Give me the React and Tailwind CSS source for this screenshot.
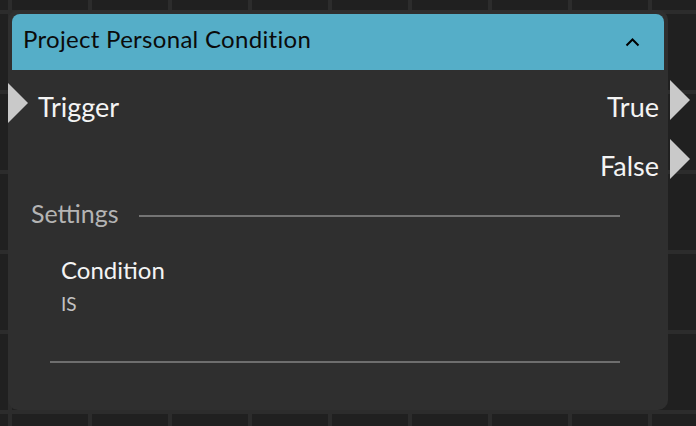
// port handle drawn as a css triangle
function Handle({ className }) {
    return (
        <div className={`absolute w-0 h-0 border-y-[20px] border-y-transparent border-l-[20px] border-l-[#c9c9c9] ${className}`} />
    );
}

export default function App() {
    return (
        <div
            className="w-[696px] h-[426px] overflow-hidden bg-[#202020] pl-[8px] pt-[10px] [background-image:linear-gradient(to_right,#2c2c2c_4px,transparent_4px),linear-gradient(to_bottom,#2c2c2c_4px,transparent_4px)] [background-size:80px_80px] [background-position:8px_10px]"
            style={{ fontFamily: 'Lato, "Open Sans", sans-serif' }}
        >
            <div className="w-[660px] h-[400px] rounded-[10px] bg-[#2f2f2f] p-[4px] flex flex-col">
                <div className="h-[56px] shrink-0 rounded-t-[8px] bg-[#55aec8] flex items-center justify-between pl-[11px] pr-[24px] pb-[6px]">
                    <span className="text-[24px] leading-none tracking-[0.3px] text-[#0b0b0b]">Project Personal Condition</span>
                    <svg width="15" height="9" viewBox="0 0 15 9" className="mt-[6px]">
                        <polyline points="1.5,7.5 7.5,1.5 13.5,7.5" fill="none" stroke="#000" strokeWidth="2" />
                    </svg>
                </div>

                <div className="relative mt-[10px] h-[40px] flex items-end justify-between pl-[26px] pr-[5px] text-[27px] leading-none text-[#f4f4f4]">
                    <Handle className="left-[-4px] top-[3px]" />
                    <span>Trigger</span>
                    <span>True</span>
                    <Handle className="right-[-26px] top-0" />
                </div>
                <div className="relative mt-[19px] h-[40px] flex items-end justify-end pr-[5px] text-[27px] leading-none text-[#f4f4f4]">
                    <span>False</span>
                    <Handle className="right-[-26px] top-0" />
                </div>

                <div className="mt-[22px] ml-[19px] mr-[44px] flex items-start gap-[20px]">
                    <span className="text-[25px] leading-none text-[#b4b4b4]">Settings</span>
                    <div className="flex-1 h-[2px] mt-[14px] bg-[#747474]" />
                </div>

                <div className="ml-[49px] mt-[32px] flex flex-col">
                    <span className="text-[24px] leading-none text-[#f4f4f4]">Condition</span>
                    <span className="mt-[12px] text-[19px] leading-none text-[#c2c2c2]">IS</span>
                </div>

                <div className="mt-[48px] ml-[38px] mr-[44px] h-[2px] bg-[#6e6e6e]" />
            </div>
        </div>
    );
}
